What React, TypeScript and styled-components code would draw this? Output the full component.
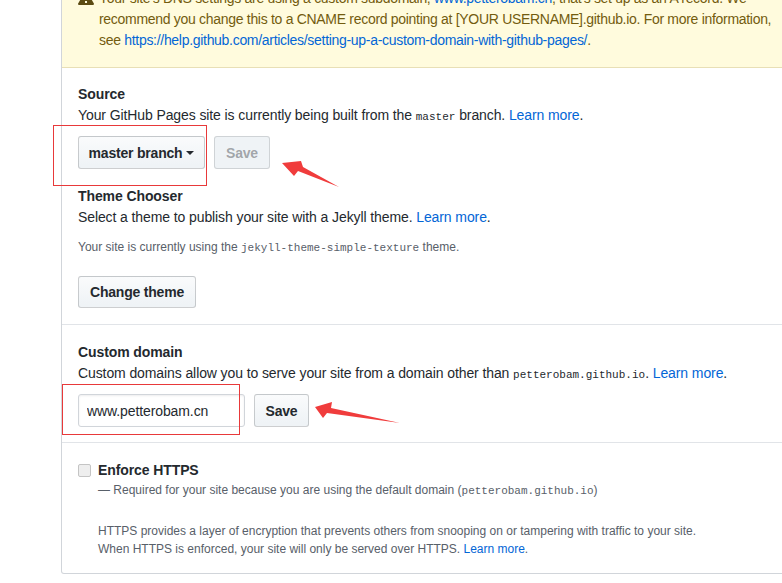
import React from "react";
import styled, { createGlobalStyle } from "styled-components";

const GlobalStyle = createGlobalStyle`
  html, body { margin: 0; padding: 0; background: #fff; }
  body {
    font-family: "Liberation Sans", Arial, sans-serif;
    font-size: 14px;
    letter-spacing: -0.1px;
    color: #24292e;
    overflow: hidden;
  }
`;

const Stage = styled.div`
  position: relative;
  width: 782px;
  height: 583px;
  overflow: hidden;
`;

const Panel = styled.div`
  margin: -28px 0 0 61px;
  width: 760px;
  border: 1px solid #d1d5da;
  border-top: none;
  border-radius: 0 0 3px 3px;
`;

const Flash = styled.div`
  display: flex;
  align-items: flex-start;
  background: #fffbdd;
  color: #735c0f;
  padding: 16px;
  border-bottom: 1px solid #e8dfb6;
  line-height: 21px;
  letter-spacing: -0.3px;
  white-space: nowrap;
`;

const FlashIcon = styled.svg`
  flex: none;
  width: 16px;
  height: 16px;
  margin: 2px 5px 0 0;
  fill: #5c4b12;
`;

const Link = styled.a`
  color: #0366d6;
  text-decoration: none;
`;

const Section = styled.div<{ $top?: number; $bottom?: number; $last?: boolean }>`
  padding: ${(p) => p.$top ?? 16}px 16px ${(p) => p.$bottom ?? 16}px;
  border-bottom: ${(p) => (p.$last ? "none" : "1px solid #e1e4e8")};
`;

const Heading = styled.h3<{ $gap?: number }>`
  margin: ${(p) => p.$gap ?? 0}px 0 0;
  font-size: 14px;
  font-weight: 700;
  line-height: 21px;
`;

const Desc = styled.p`
  margin: 0;
  line-height: 21px;
`;

const Note = styled.p<{ $gap?: number; $indent?: boolean }>`
  margin: ${(p) => p.$gap ?? 0}px 0 0 ${(p) => (p.$indent ? 20 : 0)}px;
  font-size: 12px;
  line-height: 18px;
  letter-spacing: 0;
  color: #586069;
`;

const Code = styled.code<{ $size?: number }>`
  font-family: "Liberation Mono", "DejaVu Sans Mono", monospace;
  font-size: ${(p) => p.$size ?? 11}px;
  line-height: 1;
  letter-spacing: 0;
`;

const Row = styled.div<{ $gap?: number }>`
  display: flex;
  align-items: center;
  gap: 9px;
  margin-top: ${(p) => p.$gap ?? 10}px;
`;

const Button = styled.button<{ $w: number; $h?: number }>`
  box-sizing: border-box;
  width: ${(p) => p.$w}px;
  height: ${(p) => p.$h ?? 33}px;
  padding: 0;
  display: inline-flex;
  align-items: center;
  justify-content: center;
  white-space: nowrap;
  font-family: inherit;
  font-size: 14px;
  font-weight: 700;
  letter-spacing: -0.2px;
  color: #24292e;
  background: linear-gradient(-180deg, #fafbfc 0%, #eff3f6 90%);
  border: 1px solid rgba(27, 31, 35, 0.2);
  border-radius: 3px;
  &:disabled {
    color: rgba(36, 41, 46, 0.4);
    background: #eff3f6;
    border-color: rgba(27, 31, 35, 0.15);
  }
`;

const Caret = styled.span`
  display: inline-block;
  margin-left: 4px;
  border-top: 4px solid #24292e;
  border-left: 4px solid transparent;
  border-right: 4px solid transparent;
`;

const TextInput = styled.input`
  box-sizing: border-box;
  width: 167px;
  height: 33px;
  padding: 0 8px;
  font-family: inherit;
  font-size: 14px;
  letter-spacing: -0.1px;
  color: #24292e;
  border: 1px solid #d1d5da;
  border-radius: 3px;
  box-shadow: inset 0 1px 2px rgba(27, 31, 35, 0.075);
  outline: none;
`;

const CheckRow = styled.label`
  display: flex;
  align-items: center;
  line-height: 21px;
  font-weight: 700;
`;

const Check = styled.input`
  appearance: none;
  box-sizing: border-box;
  width: 13px;
  height: 13px;
  margin: 0 7px 0 0;
  background: #eeeeee;
  border: 1px solid #c4c4c4;
  border-radius: 2px;
`;

const Annotation = styled.div<{ $x: number; $y: number; $w: number; $h: number }>`
  position: absolute;
  left: ${(p) => p.$x}px;
  top: ${(p) => p.$y}px;
  width: ${(p) => p.$w}px;
  height: ${(p) => p.$h}px;
  box-sizing: border-box;
  border: 1px solid #e8393a;
`;

const ArrowLayer = styled.svg`
  position: absolute;
  left: 0;
  top: 0;
  width: 782px;
  height: 583px;
  pointer-events: none;
`;

export default function App() {
  return (
    <Stage>
      <GlobalStyle />
      <Panel>
        <Flash>
          <FlashIcon viewBox="0 0 16 16">
            <path d="M8.893 1.5c-.183-.31-.52-.5-.887-.5s-.703.19-.886.5L.138 13.499a.98.98 0 0 0 0 1.001c.193.31.53.501.886.501h13.964c.367 0 .704-.19.877-.5a1.030 1.030 0 0 0 .01-1.002L8.893 1.5zm.133 11.497H6.987v-2.003h2.039v2.003zm0-3.004H6.987V5.987h2.039v4.006z" />
          </FlashIcon>
          <div>
            Your site's DNS settings are using a custom subdomain, <Link href="#">www.petterobam.cn</Link>, that's set up as an A record. We
            <br />
            recommend you change this to a CNAME record pointing at [YOUR USERNAME].github.io. For more information,
            <br />
            see <Link href="#">https://help.github.com/articles/setting-up-a-custom-domain-with-github-pages/</Link>.
          </div>
        </Flash>

        <Section>
          <Heading>Source</Heading>
          <Desc>
            Your GitHub Pages site is currently being built from the <Code>master</Code> branch. <Link href="#">Learn more</Link>.
          </Desc>
          <Row>
            <Button $w={127}>
              master branch
              <Caret />
            </Button>
            <Button $w={56} disabled>
              Save
            </Button>
          </Row>

          <Heading $gap={17}>Theme Chooser</Heading>
          <Desc>
            Select a theme to publish your site with a Jekyll theme. <Link href="#">Learn more</Link>.
          </Desc>
          <Note $gap={10}>
            Your site is currently using the <Code>jekyll-theme-simple-texture</Code> theme.
          </Note>
          <Row $gap={20}>
            <Button $w={118} $h={32}>
              Change theme
            </Button>
          </Row>
        </Section>

        <Section $top={17} $bottom={15}>
          <Heading>Custom domain</Heading>
          <Desc>
            Custom domains allow you to serve your site from a domain other than <Code>petterobam.github.io</Code>.{" "}
            <Link href="#">Learn more</Link>.
          </Desc>
          <Row>
            <TextInput defaultValue="www.petterobam.cn" />
            <Button $w={55}>Save</Button>
          </Row>
        </Section>

        <Section $top={17} $bottom={15} $last>
          <CheckRow>
            <Check type="checkbox" />
            Enforce HTTPS
          </CheckRow>
          <Note $indent>
            — Required for your site because you are using the default domain (<Code>petterobam.github.io</Code>)
          </Note>
          <Note $indent $gap={23}>
            HTTPS provides a layer of encryption that prevents others from snooping on or tampering with traffic to your site.
            <br />
            When HTTPS is enforced, your site will only be served over HTTPS. <Link href="#">Learn more</Link>.
          </Note>
        </Section>
      </Panel>

      <Annotation $x={53} $y={125} $w={154} $h={61} />
      <Annotation $x={62} $y={384} $w={178} $h={51} />
      <ArrowLayer viewBox="0 0 782 583">
        <polygon fill="#f03c3c" points="282,163 301,161 303,167 339,187 298,171 294,176" />
        <polygon fill="#f03c3c" points="315,407 332,402 331,408 400,423 327,413 323,418" />
      </ArrowLayer>
    </Stage>
  );
}
